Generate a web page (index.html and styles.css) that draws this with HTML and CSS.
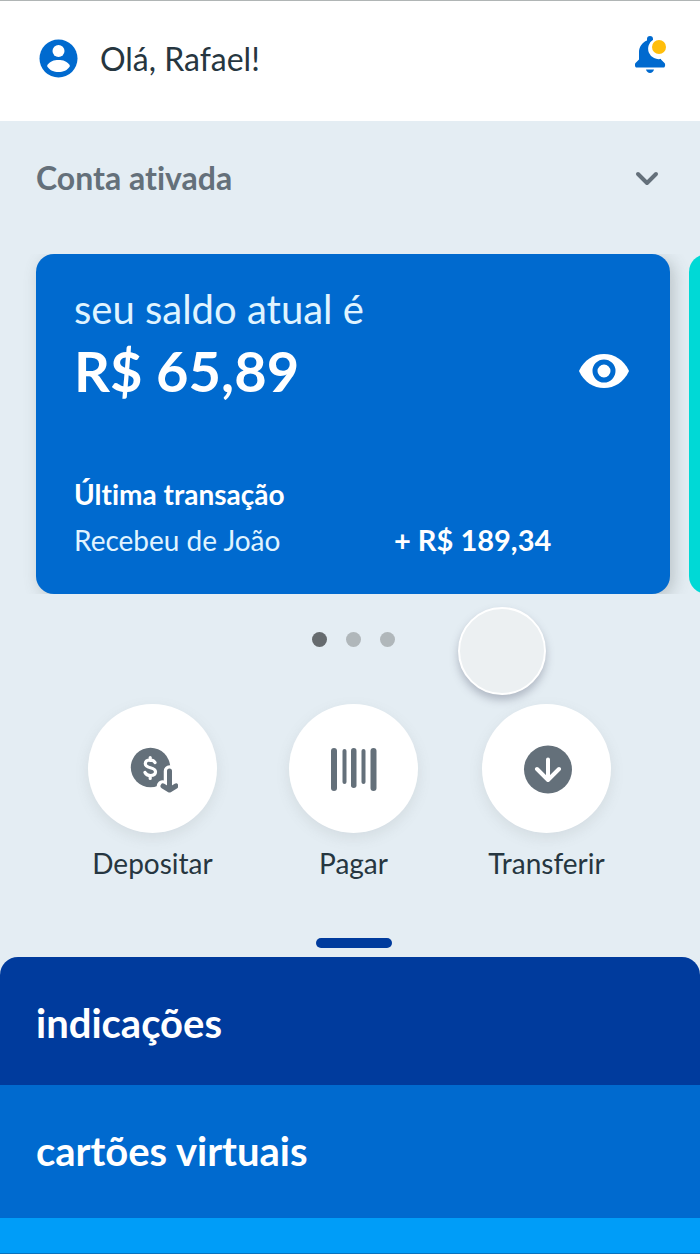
FILE: index.html
```html
<!DOCTYPE html>
<html lang="pt-BR">
<head>
<meta charset="utf-8">
<meta name="viewport" content="width=device-width, initial-scale=1">
<title>Conta</title>
<link rel="stylesheet" href="styles.css">
</head>
<body>
<div class="app">
  <header class="header">
    <div class="profile">
      <svg class="avatar" viewBox="0 0 40 40" aria-hidden="true">
        <circle cx="20.500" cy="19.500" r="19" fill="#006acf"/>
        <circle cx="20.500" cy="12" r="6" fill="#fff"/>
        <path d="M9 27C11.500 22 16 21 20.500 21s9 1 11.500 6C29.500 31.500 25 33 20.500 33S11.500 31.500 9 27Z" fill="#fff"/>
      </svg>
      <h1 class="greeting">Olá, Rafael!</h1>
    </div>
    <button class="icon-button" type="button" aria-label="Notificações">
      <svg class="bell" viewBox="0 0 32 38" aria-hidden="true">
        <path d="M12 3a3 3 0 0 1 6 0v2C23 6.500 26 11 26 16v7.500l3.500 3.500c1.200 1.200.6 4.500-1 4.500H1.500c-1.600 0-2.200-3.300-1-4.500L4 23.500V16C4 11 7 6.500 12 4.500Z" fill="#006acf"/>
        <path d="M11 33.500h8c-.6 2-2 3.500-4 3.500s-3.400-1.500-4-3.500Z" fill="#006acf"/>
        <path d="M18.500 3.500A10.500 10.500 0 1 0 34 11 10.500 10.500 0 0 0 18.500 3.500Z" fill="#fff"/>
        <circle cx="24" cy="11" r="7" fill="#ffbe0b"/>
      </svg>
    </button>
  </header>

  <main class="main">
    <button class="status" type="button">
      <span>Conta ativada</span>
      <svg class="chevron" viewBox="0 0 24 16" aria-hidden="true">
        <path d="M3 4l9 9 9-9" fill="none" stroke="#64707a" stroke-width="4" stroke-linecap="round" stroke-linejoin="round"/>
      </svg>
    </button>

    <div class="carousel">
      <section class="card">
        <div class="balance">
          <div>
            <p class="balance-label">seu saldo atual é</p>
            <p class="balance-value">R$ 65,89</p>
          </div>
          <button class="icon-button" type="button" aria-label="Ocultar saldo">
            <svg class="eye" viewBox="0 0 50 34" aria-hidden="true">
              <path d="M0 17C5 6 14.500 0 25 0s20 6 25 17C45 28 35.500 34 25 34S5 28 0 17Z" fill="#fff"/>
              <circle cx="25" cy="17" r="9" fill="#fff" stroke="#006acf" stroke-width="5"/>
            </svg>
          </button>
        </div>
        <div class="transaction">
          <h2 class="transaction-title">Última transação</h2>
          <div class="transaction-row">
            <span class="transaction-name">Recebeu de João</span>
            <span class="transaction-value">+ R$ 189,34</span>
          </div>
        </div>
      </section>
      <section class="card card-next"></section>
    </div>

    <div class="pager">
      <span class="dot dot-active"></span>
      <span class="dot"></span>
      <span class="dot"></span>
      <span class="touch"></span>
    </div>

    <nav class="actions">
      <button class="action" type="button">
        <span class="action-disc">
          <svg class="action-icon" viewBox="0 0 50 50" aria-hidden="true">
            <circle cx="22.500" cy="23.500" r="19.700" fill="#64707a"/>
            <path d="M27 18.500C26 16.500 24.500 16 22.200 16c-2.900 0-4.900 1.400-4.900 3.800 0 5.400 10.200 2.500 10.200 8 0 2.400-2 3.700-5 3.700-2.500 0-4.500-.9-5.500-3M22.200 13.500v3M22.200 31.500v3" fill="none" stroke="#fff" stroke-width="3.200" stroke-linecap="round"/>
            <path d="M41.500 27v17M34.500 42l7 4" fill="none" stroke="#fff" stroke-width="11.500" stroke-linecap="round" stroke-linejoin="round"/>
            <path d="M41.500 27v17M35 42l6.500 4 6.500-4" fill="none" stroke="#64707a" stroke-width="5" stroke-linecap="round" stroke-linejoin="round"/>
          </svg>
        </span>
        <span>Depositar</span>
      </button>
      <button class="action" type="button">
        <span class="action-disc">
          <svg class="action-icon" viewBox="0 0 50 50" aria-hidden="true">
            <g fill="#64707a">
              <rect x="2" y="4" width="6" height="43" rx="3"/>
              <rect x="13.500" y="5" width="4" height="35" rx="2"/>
              <rect x="22" y="4" width="5.500" height="40" rx="2.700"/>
              <rect x="32.500" y="5" width="4" height="35" rx="2"/>
              <rect x="41.500" y="4" width="6" height="43" rx="3"/>
            </g>
          </svg>
        </span>
        <span>Pagar</span>
      </button>
      <button class="action" type="button">
        <span class="action-disc">
          <svg class="action-icon" viewBox="0 0 50 50" aria-hidden="true">
            <circle cx="26" cy="25.500" r="24" fill="#64707a"/>
            <path d="M26 15.500v20M15 25l11 11 11-11" fill="none" stroke="#fff" stroke-width="4" stroke-linecap="round" stroke-linejoin="round"/>
          </svg>
        </span>
        <span>Transferir</span>
      </button>
    </nav>
  </main>

  <section class="sheet">
    <span class="handle"></span>
    <div class="sheet-list">
      <button class="sheet-item sheet-navy" type="button">indicações</button>
      <button class="sheet-item sheet-blue" type="button">cartões virtuais</button>
      <div class="sheet-peek"></div>
    </div>
  </section>
</div>
</body>
</html>
```

FILE: styles.css
```css
* {
  box-sizing: border-box;
}

body {
  margin: 0;
  background: #e4edf3;
  color: #263640;
  font-family: Lato, "Open Sans", sans-serif;
  font-variant-ligatures: none;
}

h1,
h2,
p {
  margin: 0;
}

button {
  padding: 0;
  border: 0;
  background: none;
  color: inherit;
  font: inherit;
  font-variant-ligatures: none;
  text-align: left;
  cursor: pointer;
}

svg {
  display: block;
}

.app {
  display: flex;
  flex-direction: column;
  min-height: 100vh;
  overflow: hidden;
}

.header {
  display: flex;
  align-items: center;
  justify-content: space-between;
  padding: 32px 33px 36px 38px;
  border-top: 1px solid #b0b5b5;
  background: #fff;
}

.profile {
  display: flex;
  align-items: center;
  gap: 22px;
}

.avatar {
  width: 40px;
  height: 40px;
}

.greeting {
  font-size: 32px;
  font-weight: 400;
  line-height: 52px;
}

.icon-button {
  flex: none;
}

.bell {
  width: 32px;
  height: 38px;
}

.header .icon-button {
  padding-bottom: 9px;
}

.status {
  display: flex;
  align-items: center;
  justify-content: space-between;
  width: 100%;
  padding: 38px 41px 58px 36px;
  color: #64707a;
  font-size: 32px;
  font-weight: 700;
  line-height: 37px;
}

.chevron {
  width: 24px;
  height: 16px;
}

.carousel {
  display: flex;
  gap: 19px;
  padding-left: 36px;
  overflow: hidden;
}

.card {
  display: flex;
  flex: 0 0 calc(100% - 30px);
  flex-direction: column;
  gap: 66px;
  padding: 32px 41px 36px 38px;
  border-radius: 18px;
  background: #006acf;
  box-shadow: 4px 4px 16px rgba(90, 100, 100, 0.3);
  color: #fff;
}

.card-next {
  background: #00d9d6;
  box-shadow: none;
}

.balance {
  display: flex;
  align-items: flex-end;
  justify-content: space-between;
}

.balance .icon-button {
  padding-bottom: 22px;
}

.balance-label {
  color: #e0f4ff;
  font-size: 40px;
  font-weight: 400;
  line-height: 46px;
}

.balance-value {
  font-size: 56px;
  font-weight: 700;
  line-height: 78px;
}

.eye {
  width: 50px;
  height: 34px;
}

.transaction {
  display: flex;
  flex-direction: column;
  gap: 10px;
}

.transaction-title {
  font-size: 28px;
  font-weight: 700;
  line-height: 36px;
}

.transaction-row {
  display: grid;
  grid-template-columns: 320px 1fr;
  align-items: center;
  line-height: 36px;
}

.transaction-name {
  color: #e0f4ff;
  font-size: 28px;
}

.transaction-value {
  font-size: 29px;
  font-weight: 700;
}

.pager {
  position: relative;
  display: flex;
  justify-content: center;
  gap: 19px;
  padding: 38px 0 57px 7px;
}

.dot {
  width: 15px;
  height: 15px;
  border-radius: 50%;
  background: #b0b7ba;
}

.dot-active {
  background: #666b6e;
}

.touch {
  position: absolute;
  top: 13px;
  left: calc(50% + 108px);
  width: 88px;
  height: 88px;
  border: 2px solid #fff;
  border-radius: 50%;
  background: #ecf0f2;
  box-shadow: 0 5px 8px rgba(80, 85, 110, 0.35);
}

.actions {
  display: grid;
  grid-template-columns: 88fr 129px 72fr 129px 64fr 129px 89fr;
  padding-bottom: 56px;
}

.action {
  display: flex;
  flex-direction: column;
  align-items: center;
  gap: 12px;
  grid-column: 2;
  font-size: 28px;
  line-height: 37px;
}

.action:nth-child(2) {
  grid-column: 4;
}

.action:nth-child(3) {
  grid-column: 6;
}

.action-disc {
  display: grid;
  place-items: center;
  width: 129px;
  height: 129px;
  border-radius: 50%;
  background: #fff;
  box-shadow: 0 5px 14px rgba(110, 120, 120, 0.14);
}

.action-icon {
  width: 50px;
  height: 50px;
}

.sheet {
  display: flex;
  flex: 1;
  flex-direction: column;
  align-items: center;
  gap: 9px;
}

.handle {
  width: 76px;
  height: 10px;
  margin-left: 7px;
  border-radius: 5px;
  background: #003b9d;
}

.sheet-list {
  display: flex;
  flex: 1;
  flex-direction: column;
  width: 100%;
  border-bottom: 1px solid #0872bd;
  border-radius: 18px 18px 0 0;
  overflow: hidden;
}

.sheet-item {
  padding: 43px 36px;
  color: #fff;
  font-size: 40px;
  font-weight: 700;
  line-height: 47px;
}

.sheet-navy {
  padding-bottom: 38px;
  background: #003b9d;
}

.sheet-blue {
  background: #006acf;
}

.sheet-peek {
  flex: 1;
  min-height: 35px;
  background: #009df8;
}
```
